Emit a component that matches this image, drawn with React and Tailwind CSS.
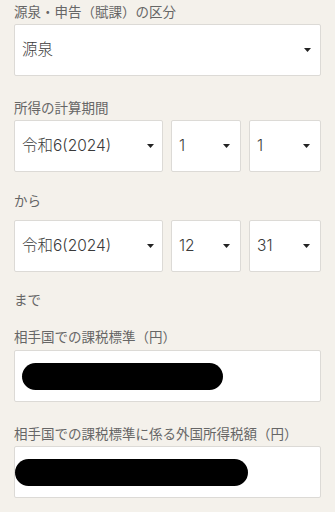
import React from 'react';

const Caret = () => (
  <svg width="7" height="4" viewBox="0 0 7 4" className="shrink-0">
    <path d="M0 0h7L3.5 4z" fill="#222" />
  </svg>
);

const Label = ({ children, className = '' }) => (
  <div className={`text-[13.5px] leading-[20px] text-[#666] ${className}`}>{children}</div>
);

const Select = ({ value, className = '', caretPad = 'pr-[9px]' }) => (
  <div
    className={`flex h-[52px] items-center justify-between rounded-[2px] border border-[#dcdad6] bg-white pl-[7px] ${caretPad} ${className}`}
  >
    <span
      className="text-[15.5px] font-light text-[#3a3a3a]"
      style={{ fontFamily: 'Inter, "Noto Sans CJK JP", sans-serif' }}
    >
      {value}
    </span>
    <Caret />
  </div>
);

const DateRow = ({ era, month, day }) => (
  <div className="flex gap-[8px]">
    <Select value={era} className="w-[149px]" caretPad="pr-[8px]" />
    <Select value={month} className="w-[70px]" caretPad="pr-[10px]" />
    <Select value={day} className="w-[72px]" caretPad="pr-[10px]" />
  </div>
);

const Redacted = ({ width, offset }) => (
  <div className="flex h-[52px] items-center rounded-[2px] border border-[#dcdad6] bg-white">
    <div className={`h-[27px] rounded-full bg-black ${width} ${offset}`} />
  </div>
);

export default function App() {
  return (
    <div
      className="min-h-[512px] bg-[#f4f1eb] px-[14px] pt-[1px]"
      style={{ fontFamily: '"Noto Sans CJK JP", "Noto Sans", sans-serif' }}
    >
      <Label className="mb-[3px]">源泉・申告（賦課）の区分</Label>
      <Select value="源泉" />

      <Label className="mb-[3px] mt-[21px]">所得の計算期間</Label>
      <DateRow era="令和6(2024)" month="1" day="1" />

      <Label className="mb-[10px] mt-[18px]">から</Label>
      <DateRow era="令和6(2024)" month="12" day="31" />

      <Label className="mt-[17px]">まで</Label>

      <Label className="mb-[4px] mt-[17px]">相手国での課税標準（円）</Label>
      <Redacted width="w-[201px]" offset="ml-[7px]" />

      <Label className="mb-[3px] mt-[21px]">相手国での課税標準に係る外国所得税額（円）</Label>
      <Redacted width="w-[233px]" offset="ml-0" />
    </div>
  );
}
